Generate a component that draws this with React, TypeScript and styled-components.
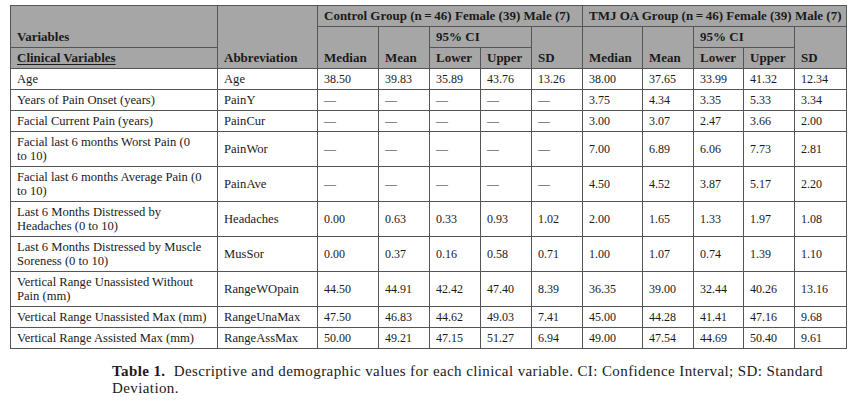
import { FC } from 'react';
import styled, { createGlobalStyle } from 'styled-components';

const GlobalStyle = createGlobalStyle`
    body {
        margin: 0;
        background: #ffffff;
        color: #1a1a1a;
        font-family: 'Liberation Serif', 'Times New Roman', serif;
    }
`;

const Page = styled.div({
    display: 'flex',
    flexDirection: 'column',
    padding: '5px 19px 0 10px',
    gap: '14px',
});

const Table = styled.table({
    borderCollapse: 'collapse',
    tableLayout: 'fixed',
    width: '836px',
    fontSize: '13px',
    lineHeight: '14px',
    border: '1px solid #555',
});

const Head = styled.th<{ $underline?: boolean }>((props) => ({
    background: '#a6a6a6',
    border: '1px solid #555',
    fontWeight: 'bold',
    textAlign: 'left',
    verticalAlign: 'bottom',
    padding: '3px 6px',
    whiteSpace: 'nowrap',
    textDecoration: props.$underline ? 'underline' : 'none',
    textUnderlineOffset: '2px',
}));

const Cell = styled.td<{ $num?: boolean }>((props) => ({
    border: '1px solid #555',
    verticalAlign: 'middle',
    padding: '3px 6px 3px 6px',
    whiteSpace: 'nowrap',
    fontSize: props.$num ? '12px' : '12.6px',
}));

const Caption = styled.p({
    margin: '0 0 0 102px',
    width: '730px',
    fontSize: '15px',
    lineHeight: '17px',
    letterSpacing: '0.4px',
    whiteSpace: 'nowrap',
});

const Label = styled.b({
    marginRight: '4px',
});

const colWidths = [207, 100, 61, 51, 51, 51, 51, 60, 51, 50, 51, 52];

const D = '—';
// label lines are split where the printed table breaks them
const rows: [string[], string, ...string[]][] = [
    [['Age'], 'Age', '38.50', '39.83', '35.89', '43.76', '13.26', '38.00', '37.65', '33.99', '41.32', '12.34'],
    [['Years of Pain Onset (years)'], 'PainY', D, D, D, D, D, '3.75', '4.34', '3.35', '5.33', '3.34'],
    [['Facial Current Pain (years)'], 'PainCur', D, D, D, D, D, '3.00', '3.07', '2.47', '3.66', '2.00'],
    [['Facial last 6 months Worst Pain (0', 'to 10)'], 'PainWor', D, D, D, D, D, '7.00', '6.89', '6.06', '7.73', '2.81'],
    [['Facial last 6 months Average Pain (0', 'to 10)'], 'PainAve', D, D, D, D, D, '4.50', '4.52', '3.87', '5.17', '2.20'],
    [['Last 6 Months Distressed by', 'Headaches (0 to 10)'], 'Headaches', '0.00', '0.63', '0.33', '0.93', '1.02', '2.00', '1.65', '1.33', '1.97', '1.08'],
    [['Last 6 Months Distressed by Muscle', 'Soreness (0 to 10)'], 'MusSor', '0.00', '0.37', '0.16', '0.58', '0.71', '1.00', '1.07', '0.74', '1.39', '1.10'],
    [['Vertical Range Unassisted Without', 'Pain (mm)'], 'RangeWOpain', '44.50', '44.91', '42.42', '47.40', '8.39', '36.35', '39.00', '32.44', '40.26', '13.16'],
    [['Vertical Range Unassisted Max (mm)'], 'RangeUnaMax', '47.50', '46.83', '44.62', '49.03', '7.41', '45.00', '44.28', '41.41', '47.16', '9.68'],
    [['Vertical Range Assisted Max (mm)'], 'RangeAssMax', '50.00', '49.21', '47.15', '51.27', '6.94', '49.00', '47.54', '44.69', '50.40', '9.61'],
];

const groups = ['Control Group (n\u2009=\u200946) Female (39) Male (7)', 'TMJ OA Group (n\u2009=\u200946) Female (39) Male (7)'];

const App: FC = (): JSX.Element => {
    return (
        <>
            <GlobalStyle />
            <Page>
                <Table>
                    <colgroup>
                        {colWidths.map((w, i) => (
                            <col key={i} style={{ width: `${w}px` }} />
                        ))}
                    </colgroup>
                    <thead>
                        <tr>
                            <Head rowSpan={2}>Variables</Head>
                            <Head rowSpan={3}>Abbreviation</Head>
                            {groups.map((g) => (
                                <Head key={g} colSpan={5}>{g}</Head>
                            ))}
                        </tr>
                        <tr>
                            {groups.map((g) => [
                                <Head key={g + 'med'} rowSpan={2}>Median</Head>,
                                <Head key={g + 'mean'} rowSpan={2}>Mean</Head>,
                                <Head key={g + 'ci'} colSpan={2}>95% CI</Head>,
                                <Head key={g + 'sd'} rowSpan={2}>SD</Head>,
                            ])}
                        </tr>
                        <tr>
                            <Head $underline>Clinical Variables</Head>
                            {groups.map((g) => [
                                <Head key={g + 'lo'}>Lower</Head>,
                                <Head key={g + 'up'}>Upper</Head>,
                            ])}
                        </tr>
                    </thead>
                    <tbody>
                        {rows.map(([label, abbr, ...values]) => (
                            <tr key={abbr}>
                                <Cell>
                                    {label.map((line, i) => (
                                        <span key={i}>
                                            {i > 0 && <br />}
                                            {line}
                                        </span>
                                    ))}
                                </Cell>
                                <Cell>{abbr}</Cell>
                                {values.map((v, i) => (
                                    <Cell key={i} $num>{v}</Cell>
                                ))}
                            </tr>
                        ))}
                    </tbody>
                </Table>
                <Caption>
                    <Label>Table 1.</Label> Descriptive and demographic values for each clinical variable. CI: Confidence Interval; SD: Standard
                    <br />
                    Deviation.
                </Caption>
            </Page>
        </>
    );
};

export default App;
